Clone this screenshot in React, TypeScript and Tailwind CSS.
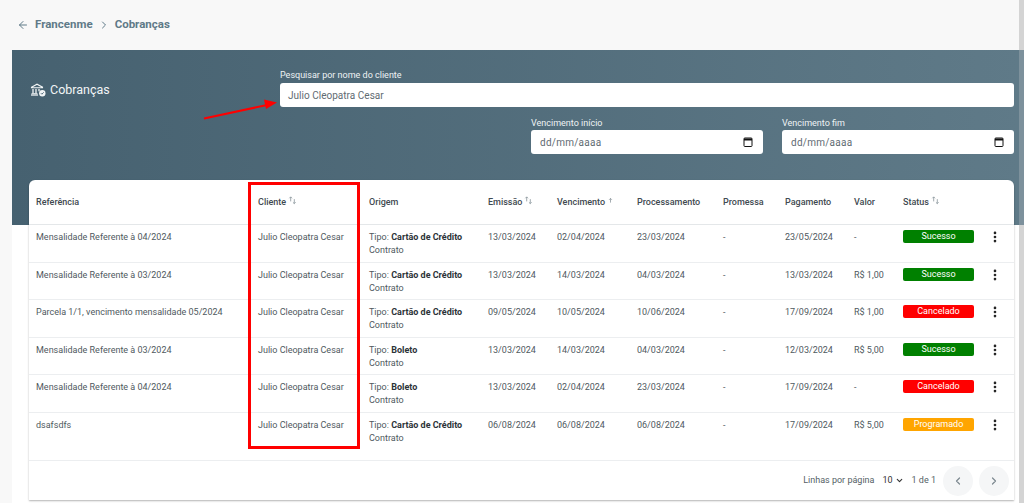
import { ArrowLeft, ChevronRight, ChevronLeft, ChevronDown, EllipsisVertical } from 'lucide-react';

interface Row {
  ref: string;
  tipo: string;
  emissao: string;
  vencimento: string;
  processamento: string;
  pagamento: string;
  valor: string;
  status: 'Sucesso' | 'Cancelado' | 'Programado';
}

const rows: Row[] = [
  { ref: 'Mensalidade Referente à 04/2024', tipo: 'Cartão de Crédito', emissao: '13/03/2024', vencimento: '02/04/2024', processamento: '23/03/2024', pagamento: '23/05/2024', valor: '-', status: 'Sucesso' },
  { ref: 'Mensalidade Referente à 03/2024', tipo: 'Cartão de Crédito', emissao: '13/03/2024', vencimento: '14/03/2024', processamento: '04/03/2024', pagamento: '13/03/2024', valor: 'R$ 1,00', status: 'Sucesso' },
  { ref: 'Parcela 1/1, vencimento mensalidade 05/2024', tipo: 'Cartão de Crédito', emissao: '09/05/2024', vencimento: '10/05/2024', processamento: '10/06/2024', pagamento: '17/09/2024', valor: 'R$ 1,00', status: 'Cancelado' },
  { ref: 'Mensalidade Referente à 03/2024', tipo: 'Boleto', emissao: '13/03/2024', vencimento: '14/03/2024', processamento: '04/03/2024', pagamento: '12/03/2024', valor: 'R$ 5,00', status: 'Sucesso' },
  { ref: 'Mensalidade Referente à 04/2024', tipo: 'Boleto', emissao: '13/03/2024', vencimento: '02/04/2024', processamento: '23/03/2024', pagamento: '17/09/2024', valor: '-', status: 'Cancelado' },
  { ref: 'dsafsdfs', tipo: 'Cartão de Crédito', emissao: '06/08/2024', vencimento: '06/08/2024', processamento: '06/08/2024', pagamento: '17/09/2024', valor: 'R$ 5,00', status: 'Programado' },
];

const statusClass = {
  Sucesso: 'bg-[#008000]',
  Cancelado: 'bg-[#ff0000]',
  Programado: 'bg-[#ffa500]',
};

const SortIcon = () => (
  <svg viewBox="0 0 10 10" className="mb-[4px] ml-[2px] inline-block h-[9px] w-[9px] text-[#8a949b]" fill="none" stroke="currentColor" strokeWidth="0.9">
    <path d="M3 6V1M1.5 2.5 3 1l1.5 1.5" />
    <path d="M7 3.5v5M5.5 7 7 8.5 8.5 7" />
  </svg>
);

const UpIcon = () => (
  <svg viewBox="0 0 10 10" className="mb-[3px] ml-[2px] inline-block h-[7px] w-[7px] text-[#8a949b]" fill="none" stroke="currentColor" strokeWidth="1.1">
    <path d="M5 8V2M3 4l2-2 2 2" />
  </svg>
);

const CalendarIcon = () => (
  <svg viewBox="0 0 12 12" className="h-[12px] w-[12px] text-[#111]" fill="none" stroke="currentColor">
    <rect x="2" y="2" width="8" height="8.5" rx="0.8" strokeWidth="1" />
    <path d="M2 3.5h8" strokeWidth="2" />
  </svg>
);

// bank building with a small check badge
const BankIcon = () => (
  <svg viewBox="0 0 16 14" className="h-[14px] w-[16px] text-[#f2f5f6]" fill="none" stroke="currentColor" strokeWidth="1.1">
    <path d="M1.5 4.2 7 1.2l5.5 3v.6h-11z" />
    <path d="M3 6v4.2M6 6v4.2M9 6v2.2" strokeWidth="1.3" />
    <path d="M1 12h7" strokeWidth="1.3" />
    <path d="M1.5 10.6h6" strokeWidth="0.9" />
    <circle cx="12.3" cy="10.2" r="3.2" fill="currentColor" stroke="none" />
    <path d="M10.9 10.2l1 1 1.8-1.9" stroke="#466170" strokeWidth="0.9" />
  </svg>
);

const DateField = ({ label }: { label: string }) => (
  <div className="w-[232px]">
    <div className="h-[14px] text-[9px] leading-[14px] text-[#eef2f4]">{label}</div>
    <div className="flex h-[24px] items-center justify-between rounded-[3px] bg-white pl-[9px] pr-[9px] text-[10px] tracking-[0.25px] text-[#5f6b72]">
      <span>dd/mm/aaaa</span>
      <CalendarIcon />
    </div>
  </div>
);

export default function App() {
  return (
    <div className="flex h-[503px] w-[1024px] overflow-hidden bg-[#f8f8f8] font-['Roboto',sans-serif]">
      <div className="relative w-[1019px] shrink-0">
        <div className="flex h-[50px] items-center pl-[17px] text-[11.5px] font-bold text-[#5f7a88]">
          <ArrowLeft className="mr-[6px] h-[12px] w-[12px]" strokeWidth={2} />
          <span>Francenme</span>
          <ChevronRight className="mx-[5px] h-[12px] w-[12px]" strokeWidth={2} />
          <span>Cobranças</span>
        </div>

        <div className="ml-[12px] h-[453px] bg-white">
          <div className="flex h-[175px] justify-between bg-gradient-to-r from-[#466170] to-[#5f7a88] pl-[18px] pr-[5px] pt-[18px]">
            <div className="flex h-[44px] items-center gap-[4px] text-[12.5px] text-[#f2f5f6]">
              <BankIcon />
              <span>Cobranças</span>
            </div>
            <div className="w-[734px]">
              <div className="mb-[1px] h-[14px] text-[9px] leading-[14px] text-[#eef2f4]">Pesquisar por nome do cliente</div>
              <div className="flex h-[24px] items-center rounded-[3px] bg-white pl-[8px] text-[10px] tracking-[0.02px] text-[#5f6b72]">Julio Cleopatra Cesar</div>
              <div className="mt-[9px] flex justify-end gap-[19px]">
                <DateField label="Vencimento início" />
                <DateField label="Vencimento fim" />
              </div>
            </div>
          </div>

          <div className="-mt-[45px] ml-[17px] mr-[5px] h-[320px] overflow-hidden rounded-t-[6px] bg-white shadow-[0_1px_2px_rgba(0,0,0,0.3)]">
            <table className="w-[985px] table-fixed border-collapse text-left text-[9px] text-[#4f5960]">
              <colgroup>
                <col className="w-[222px]" />
                <col className="w-[111px]" />
                <col className="w-[119px]" />
                <col className="w-[69px]" />
                <col className="w-[80px]" />
                <col className="w-[86px]" />
                <col className="w-[62px]" />
                <col className="w-[69px]" />
                <col className="w-[49px]" />
                <col className="w-[83px]" />
                <col className="w-[35px]" />
              </colgroup>
              <thead>
                <tr className="h-[44.5px] border-b border-[#e4e7e9] text-[#3f4a51]">
                  <th className="pl-[7px] pt-[1px] font-medium">Referência</th>
                  <th className="pl-[7px] pt-[1px] font-medium">Cliente<SortIcon /></th>
                  <th className="pl-[7px] pt-[1px] font-medium">Origem</th>
                  <th className="pl-[7px] pt-[1px] font-medium">Emissão<SortIcon /></th>
                  <th className="pl-[7px] pt-[1px] font-medium">Vencimento<UpIcon /></th>
                  <th className="pl-[7px] pt-[1px] font-medium">Processamento</th>
                  <th className="pl-[7px] pt-[1px] font-medium">Promessa</th>
                  <th className="pl-[7px] pt-[1px] font-medium">Pagamento</th>
                  <th className="pl-[7px] pt-[1px] font-medium">Valor</th>
                  <th className="pl-[7px] pt-[1px] font-medium">Status<SortIcon /></th>
                  <th />
                </tr>
              </thead>
              <tbody>
                {rows.map((row, i) => (
                  <tr key={i} className={`border-b border-[#eceef0] align-top ${i === 5 ? 'h-[48px]' : 'h-[37.6px]'}`}>
                    <td className="whitespace-nowrap pl-[7px] pt-[6px] leading-[13px]">{row.ref}</td>
                    <td className="whitespace-nowrap pl-[7px] pt-[6px] leading-[13px]">Julio Cleopatra Cesar</td>
                    <td className="whitespace-nowrap pl-[7px] pt-[6px] leading-[13px]">
                      <div>Tipo: <b className="font-bold text-[#2c3338]">{row.tipo}</b></div>
                      <div>Contrato</div>
                    </td>
                    <td className="pl-[7px] pt-[6px] leading-[13px]">{row.emissao}</td>
                    <td className="pl-[7px] pt-[6px] leading-[13px]">{row.vencimento}</td>
                    <td className="pl-[7px] pt-[6px] leading-[13px]">{row.processamento}</td>
                    <td className="pl-[7px] pt-[6px] leading-[13px]">-</td>
                    <td className="pl-[7px] pt-[6px] leading-[13px]">{row.pagamento}</td>
                    <td className="pl-[7px] pt-[6px] leading-[13px]">{row.valor}</td>
                    <td className="pl-[7px] pt-[5px]">
                      <div className={`flex h-[13px] w-[71px] items-center justify-center rounded-[2px] text-[9px] leading-[13px] text-white ${statusClass[row.status]}`}>{row.status}</div>
                    </td>
                    <td className="pt-[5px]">
                      <EllipsisVertical className="ml-[9px] h-[14px] w-[14px] text-[#222]" strokeWidth={2.6} />
                    </td>
                  </tr>
                ))}
              </tbody>
            </table>
            <div className="flex h-[40px] items-center justify-end pr-[5px] text-[9px] text-[#555f66]">
              <span>Linhas por página</span>
              <span className="ml-[8px] flex items-center gap-[2px] text-[#333]">10<ChevronDown className="h-[9px] w-[9px]" strokeWidth={3} /></span>
              <span className="ml-[8px]">1 de 1</span>
              <span className="ml-[7px] flex h-[30px] w-[30px] items-center justify-center rounded-full bg-[#f5f6f7]"><ChevronLeft className="h-[12px] w-[12px] text-[#7c8890]" strokeWidth={2.4} /></span>
              <span className="ml-[6px] flex h-[30px] w-[30px] items-center justify-center rounded-full bg-[#f5f6f7]"><ChevronRight className="h-[12px] w-[12px] text-[#7c8890]" strokeWidth={2.4} /></span>
            </div>
          </div>
        </div>

        {/* annotations on the screenshot */}
        <div className="absolute left-[248px] top-[182px] h-[267px] w-[112px] border-[3px] border-[#ff0000]" />
        <svg className="absolute left-[200px] top-[96px] h-[28px] w-[82px]" viewBox="0 0 82 28">
          <path d="M4 22.5 67 9" stroke="#ff0000" strokeWidth="2" />
          <path d="M77 6.5 64 3.5 66 13Z" fill="#ff0000" />
        </svg>
      </div>
      <div className="flex h-full flex-1 flex-col">
        <div className="h-[50px] bg-[#d4d4d4]" />
        <div className="h-[175px] bg-[#7d919c]" />
        <div className="flex-1 bg-[#d4d4d4]" />
      </div>
    </div>
  );
}
